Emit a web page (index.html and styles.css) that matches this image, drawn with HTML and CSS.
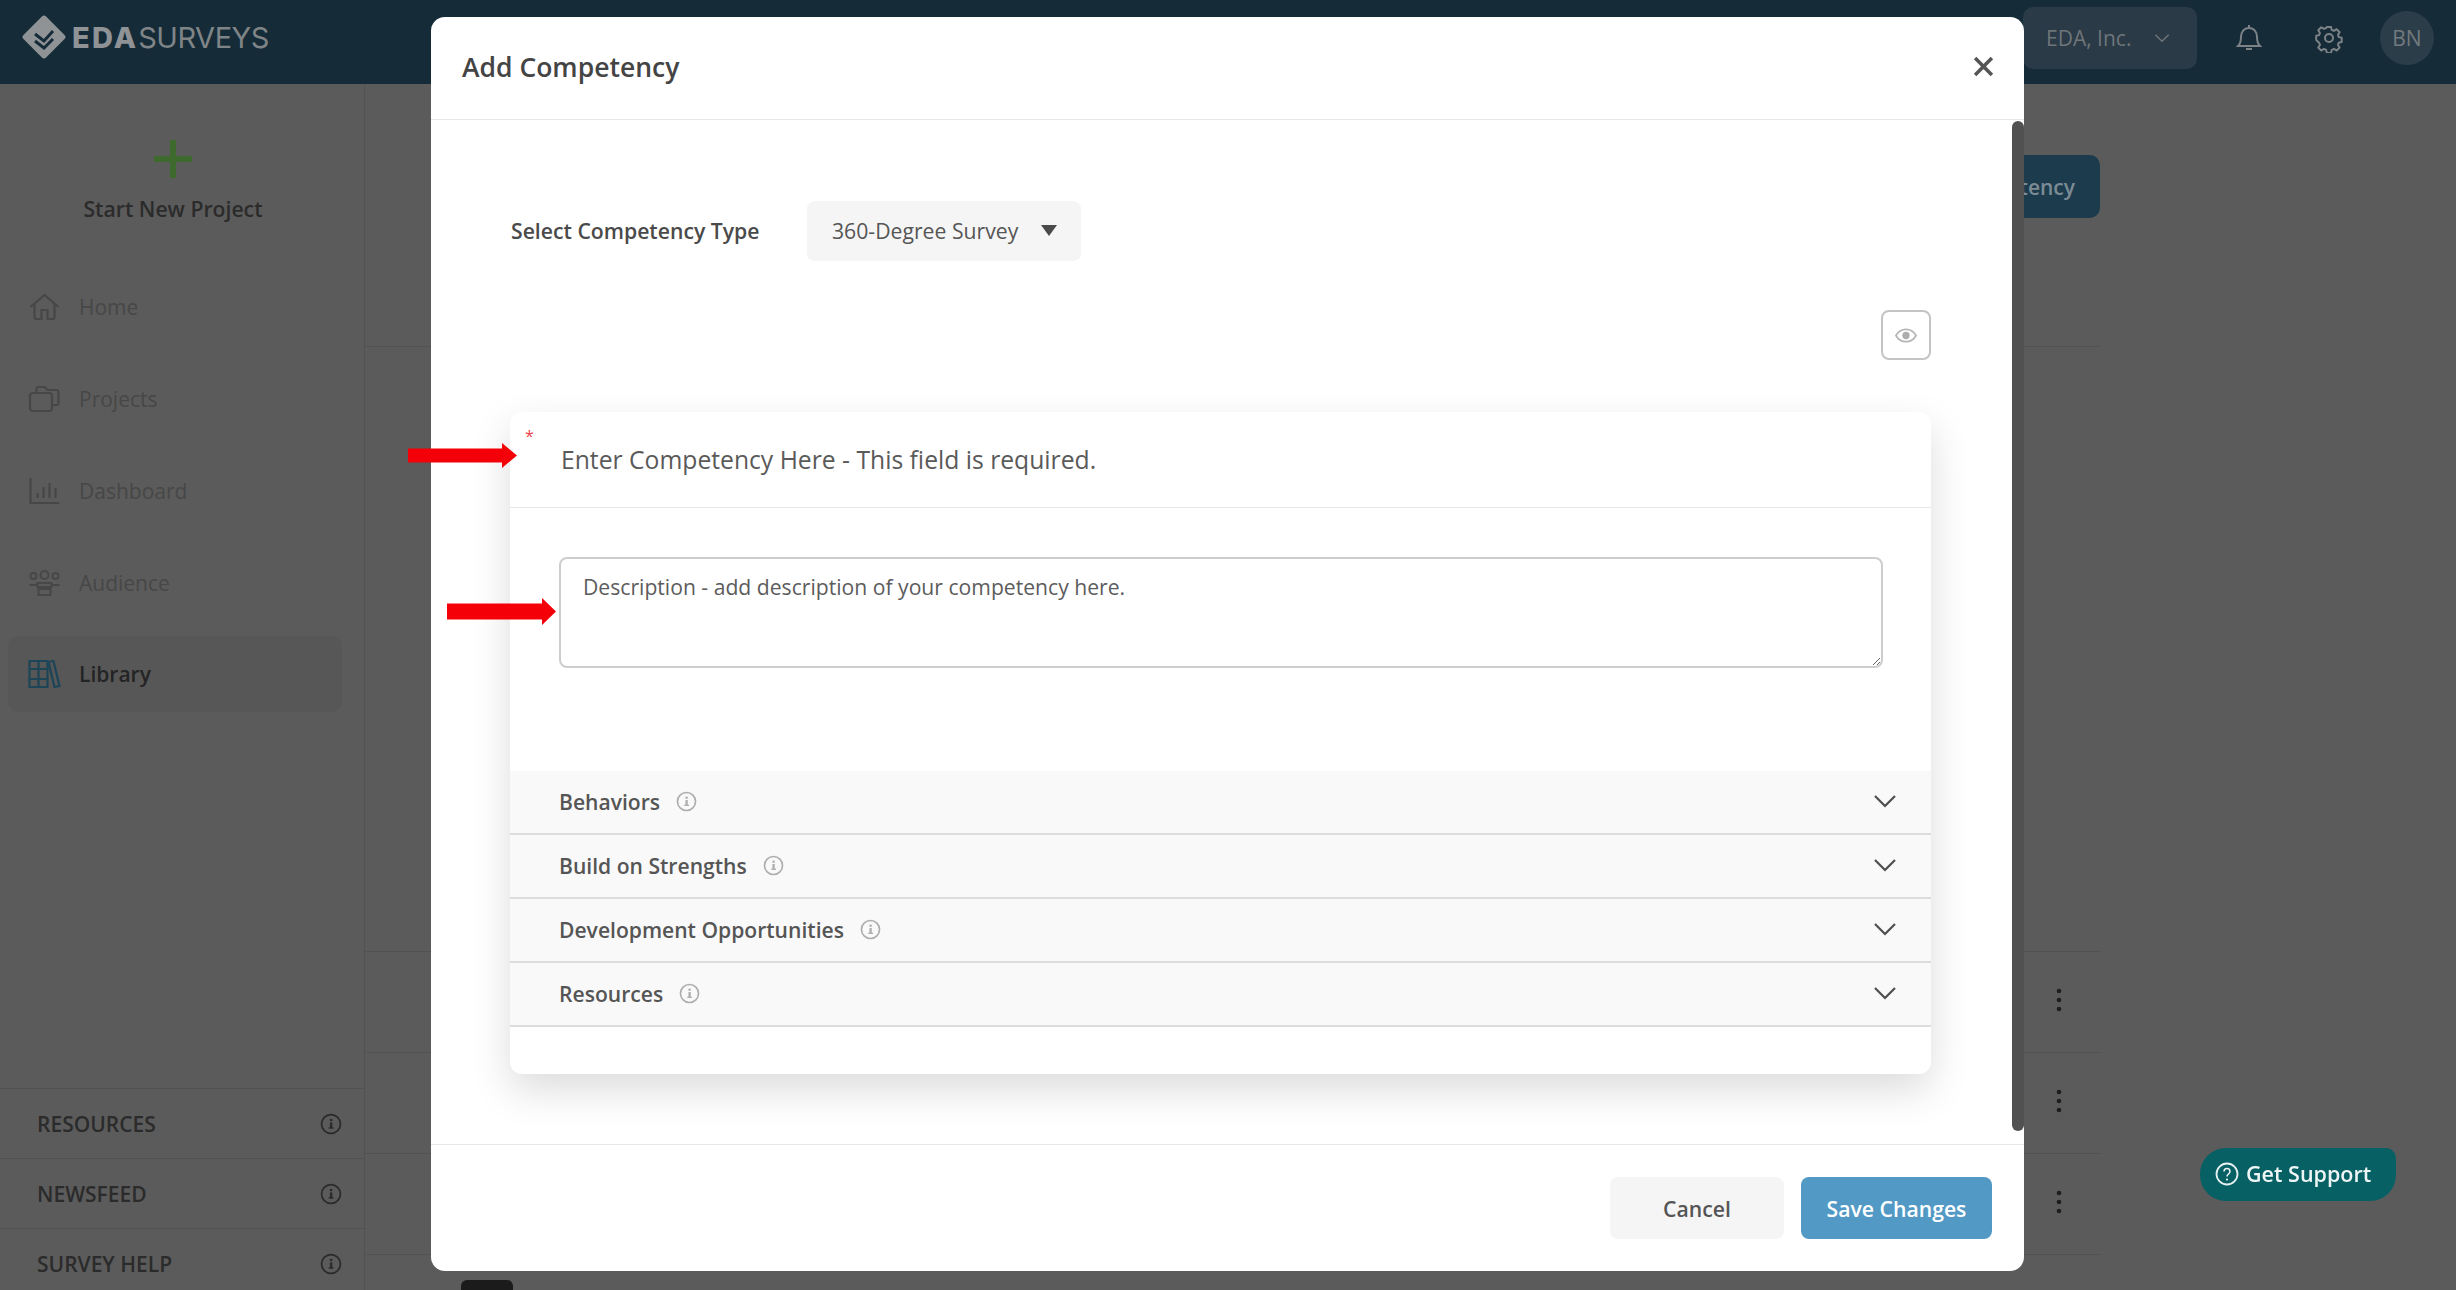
FILE: index.html
```html
<!DOCTYPE html>
<html lang="en">
<head>
<meta charset="utf-8">
<title>Add Competency</title>
<link rel="stylesheet" href="styles.css">
</head>
<body>
<svg class="defs" width="0" height="0" aria-hidden="true">
  <symbol id="info" viewBox="0 0 20 20">
    <circle cx="10" cy="10" r="8.6" fill="none" stroke="currentColor" stroke-width="1.6"/>
    <rect x="9" y="8.6" width="2.2" height="5.4" fill="currentColor"/>
    <rect x="9" y="5.4" width="2.2" height="2" fill="currentColor"/>
    <rect x="7.8" y="13" width="4.6" height="1.2" fill="currentColor"/>
  </symbol>
  <symbol id="chev" viewBox="0 0 24 14">
    <path d="M2 2l10 10L22 2" fill="none" stroke="currentColor" stroke-width="2.2"/>
  </symbol>
  <symbol id="kebab" viewBox="0 0 6 24">
    <circle cx="3" cy="3" r="2.3" fill="currentColor"/><circle cx="3" cy="12" r="2.3" fill="currentColor"/><circle cx="3" cy="21" r="2.3" fill="currentColor"/>
  </symbol>
</svg>

<div class="app">
  <header class="topbar">
    <div class="logo">
      <svg class="logo-mark" viewBox="0 0 48 48">
        <rect x="8" y="8" width="32" height="32" rx="3" transform="rotate(45 24 24)" fill="#8f9396"/>
        <path d="M15 21l9 7 9-10M15 28l9 7 9-9" fill="none" stroke="#152b38" stroke-width="3"/>
      </svg>
      <span class="logo-text"><b>EDA</b>SURVEYS</span>
    </div>
    <div class="top-right">
      <div class="org">EDA, Inc.
        <svg class="org-chev"><use href="#chev"/></svg>
      </div>
      <svg class="top-icon" viewBox="0 0 30 30">
        <path d="M4 23c2-2 3-4 3-9 0-5 3-9 8-9s8 4 8 9c0 5 1 7 3 9z M12 26h6 M15 2v3" fill="none" stroke="#7c8286" stroke-width="2"/>
      </svg>
      <svg class="top-icon gear" viewBox="0 0 30 30">
        <path d="M12.5 2h5l.8 3.6 2.6 1.1 3.2-2 3.5 3.6-2 3.1 1 2.6 3.4.8v5l-3.4.8-1 2.6 2 3.1-3.5 3.600-3.200-2-2.600 1.100-.800 3.600h-5l-.800-3.600-2.600-1.100-3.200 2-3.500-3.600 2-3.100-1-2.600L0 17.500v-5l3.400-.8 1-2.600-2-3.100L5.900 2.400l3.200 2 2.600-1.100z" transform="translate(2.200 2.200) scale(.85)" fill="none" stroke="#7c8286" stroke-width="2.300" stroke-linejoin="round"/>
        <circle cx="15" cy="15" r="4" fill="none" stroke="#7c8286" stroke-width="2"/>
      </svg>
      <div class="avatar">BN</div>
    </div>
  </header>

  <div class="shell">
    <aside class="sidebar">
      <div class="start">
        <svg class="plus" viewBox="0 0 38 38"><path d="M19 0v38M0 19h38" stroke="#3f6a2e" stroke-width="6"/></svg>
        <div class="start-label">Start New Project</div>
      </div>
      <nav class="nav">
        <div class="nav-item">
          <svg class="nav-icon" viewBox="0 0 32 28"><path d="M2 14L16 2l14 12M6 11v13a2 2 0 0 0 2 2h5v-9h6v9h5a2 2 0 0 0 2-2V11" fill="none" stroke="#474747" stroke-width="2.200"/></svg>
          <span>Home</span>
        </div>
        <div class="nav-item">
          <svg class="nav-icon" viewBox="0 0 32 28"><rect x="1.500" y="8" width="22" height="18" rx="3" fill="none" stroke="#474747" stroke-width="2.200"/><path d="M8 8V4a2 2 0 0 1 2-2h6l3 3h9a2 2 0 0 1 2 2v11a2 2 0 0 1-2 2h-4.500" fill="none" stroke="#474747" stroke-width="2.200"/></svg>
          <span>Projects</span>
        </div>
        <div class="nav-item">
          <svg class="nav-icon" viewBox="0 0 32 28"><path d="M2 1v25h29M9 16v5M15 10v11M21 6v15M27 11v10" fill="none" stroke="#474747" stroke-width="2.200"/></svg>
          <span>Dashboard</span>
        </div>
        <div class="nav-item">
          <svg class="nav-icon" viewBox="0 0 32 28"><circle cx="16" cy="6" r="4" fill="none" stroke="#474747" stroke-width="2"/><circle cx="5" cy="7" r="3" fill="none" stroke="#474747" stroke-width="2"/><circle cx="27" cy="7" r="3" fill="none" stroke="#474747" stroke-width="2"/><path d="M1 16h7M24 16h7M9 14h14v4h-14zM10 20h12v6H10z" fill="none" stroke="#474747" stroke-width="2"/></svg>
          <span>Audience</span>
        </div>
        <div class="nav-item active">
          <svg class="nav-icon" viewBox="0 0 32 28"><path d="M1 1h9v26H1zM10 1h9v26h-9zM1 9h18M1 19h18M20 2l5-1 6 25-5 1z" fill="none" stroke="#1c4558" stroke-width="2.200"/></svg>
          <span>Library</span>
        </div>
      </nav>
      <div class="side-links">
        <div class="side-link"><span>RESOURCES</span><svg class="side-info"><use href="#info"/></svg></div>
        <div class="side-link"><span>NEWSFEED</span><svg class="side-info"><use href="#info"/></svg></div>
        <div class="side-link"><span>SURVEY HELP</span><svg class="side-info"><use href="#info"/></svg></div>
      </div>
    </aside>
    <main class="main">
      <div class="main-head">
        <div class="main-btn">Add Competency</div>
      </div>
      <div class="table">
        <div class="table-row"><svg class="kebab"><use href="#kebab"/></svg></div>
        <div class="table-row"><svg class="kebab"><use href="#kebab"/></svg></div>
        <div class="table-row"><svg class="kebab"><use href="#kebab"/></svg></div>
        <div class="table-row"><svg class="kebab"><use href="#kebab"/></svg></div>
      </div>
      <div class="dark-chip"></div>
    </main>
  </div>

  <div class="support">
    <svg class="support-icon" viewBox="0 0 24 24"><circle cx="12" cy="12" r="10.500" fill="none" stroke="#e8f1f1" stroke-width="1.800"/><path d="M9 9.500c0-4 6-4 6 0 0 2.500-3 2.500-3 5" fill="none" stroke="#e8f1f1" stroke-width="1.600"/><circle cx="12" cy="17.500" r="1.100" fill="#e8f1f1"/></svg>
    Get Support
  </div>

  <div class="overlay">
    <section class="modal">
      <header class="modal-head">
        <h1 class="modal-title">Add Competency</h1>
        <svg class="close" viewBox="0 0 20 20"><path d="M2 2l16 16M18 2L2 18" stroke="#555" stroke-width="3.400"/></svg>
      </header>
      <div class="modal-body">
        <div class="type-row">
          <label class="type-label">Select Competency Type</label>
          <div class="select">360-Degree Survey<span class="caret"></span></div>
        </div>
        <div class="eye-row">
          <div class="eye-btn">
            <svg class="eye" viewBox="0 0 24 16"><path d="M1 8c5-9 17-9 22 0-5 9-17 9-22 0z" fill="none" stroke="#b5b5b5" stroke-width="1.800"/><circle cx="12" cy="8" r="4" fill="#adadad"/></svg>
          </div>
        </div>
        <div class="card">
          <div class="card-title">
            <span class="req">*</span>
            <span>Enter Competency Here - This field is required.</span>
          </div>
          <div class="card-desc">
            <textarea class="desc" placeholder="Description - add description of your competency here."></textarea>
          </div>
          <div class="accordion">
            <div class="acc-row"><span class="acc-label">Behaviors</span><svg class="acc-info"><use href="#info"/></svg><svg class="acc-chev"><use href="#chev"/></svg></div>
            <div class="acc-row"><span class="acc-label">Build on Strengths</span><svg class="acc-info"><use href="#info"/></svg><svg class="acc-chev"><use href="#chev"/></svg></div>
            <div class="acc-row"><span class="acc-label">Development Opportunities</span><svg class="acc-info"><use href="#info"/></svg><svg class="acc-chev"><use href="#chev"/></svg></div>
            <div class="acc-row"><span class="acc-label">Resources</span><svg class="acc-info"><use href="#info"/></svg><svg class="acc-chev"><use href="#chev"/></svg></div>
          </div>
        </div>
        <div class="scrollbar"></div>
      </div>
      <footer class="modal-foot">
        <div class="btn btn-cancel">Cancel</div>
        <div class="btn btn-save">Save Changes</div>
      </footer>
    </section>
    <svg class="arrow arrow-a" viewBox="0 0 109 25"><path d="M0 5.500h94V0l15 12.500L94 25v-5.500H0z" fill="#f40009"/></svg>
    <svg class="arrow arrow-b" viewBox="0 0 109 27"><path d="M0 5.500h95V0l14 13.500L95 27v-5.500H0z" fill="#f40009"/></svg>
  </div>
</div>
</body>
</html>
```
FILE: styles.css
```css
* { box-sizing: border-box; }
html, body { margin: 0; padding: 0; height: 100%; }
body {
  font-family: "Open Sans", "Liberation Sans", sans-serif;
  background: #5b5b5b;
  overflow: hidden;
}
.defs { position: absolute; }

.app {
  position: relative;
  width: 2456px;
  height: 1290px;
  display: flex;
  flex-direction: column;
  overflow: hidden;
  filter: blur(0.5px);
}

/* top bar */
.topbar {
  height: 84px;
  flex: none;
  background: #152b38;
  display: flex;
  align-items: center;
  justify-content: space-between;
  padding: 0 22px 8px 20px;
}
.logo { display: flex; align-items: center; gap: 4px; padding-bottom: 2px; }
.logo-mark { width: 48px; height: 48px; }
.logo-text {
  font-family: "Inter", "Liberation Sans", sans-serif;
  font-size: 29px;
  letter-spacing: -0.5px;
  color: #7f8487;
}
.logo-text b { font-weight: 800; letter-spacing: 2.200px; color: #8f9396; }
.top-right { display: flex; align-items: center; }
.org {
  width: 174px;
  height: 62px;
  margin-right: 37px;
  padding-left: 23px;
  border-radius: 10px;
  background: #2a3a46;
  color: #6e7579;
  font-size: 21px;
  display: flex;
  align-items: center;
}
.org-chev { width: 16px; height: 10px; margin-left: 23px; color: #6e7579; }
.top-icon { width: 30px; height: 30px; margin-right: 50px; }
.gear { margin-right: 36px; }
.avatar {
  width: 54px;
  height: 54px;
  border-radius: 50%;
  background: #2c3d4a;
  color: #737a7e;
  font-size: 21px;
  display: flex;
  align-items: center;
  justify-content: center;
}

/* shell */
.shell { flex: 1; display: flex; min-height: 0; }
.sidebar {
  width: 365px;
  flex: none;
  border-right: 1px solid #525252;
  display: flex;
  flex-direction: column;
  background: #5b5b5b;
}
.start {
  height: 177px;
  padding-top: 56px;
  display: flex;
  flex-direction: column;
  align-items: center;
  width: 346px;
}
.plus { width: 38px; height: 38px; }
.start-label {
  margin-top: 17px;
  font-size: 21.200px;
  font-weight: 600;
  line-height: 28px;
  color: #2b2b2b;
}
.nav { display: flex; flex-direction: column; padding: 0 22px 0 8px; }
.nav-item {
  height: 92px;
  display: flex;
  align-items: center;
  gap: 18px;
  padding-left: 20px;
  font-size: 21px;
  color: #474747;
}
.nav-icon { width: 33px; height: 28px; }
.nav-item.active {
  height: 76px;
  margin-top: 7px;
  border-radius: 10px;
  background: #575757;
  font-weight: 600;
  color: #242424;
}
.side-links { margin-top: auto; margin-bottom: -8px; display: flex; flex-direction: column; }
.side-link {
  height: 70px;
  flex: none;
  border-top: 1px solid #525252;
  display: flex;
  align-items: center;
  justify-content: space-between;
  padding: 0 22px 0 37px;
  font-size: 21px;
  font-weight: 600;
  color: #2b2b2b;
}
.side-info { width: 22px; height: 22px; color: #2b2b2b; }

/* main behind the modal */
.main { flex: 1; min-width: 0; position: relative; }
.main-head {
  height: 263px;
  width: 1735px;
  border-bottom: 1px solid #525252;
  padding: 71px 0 0;
  display: flex;
  justify-content: flex-end;
}
.main-btn {
  height: 63px;
  padding: 0 25px;
  border-radius: 10px;
  background: #1c3c4e;
  color: #7c8b94;
  font-size: 21px;
  font-weight: 600;
  display: flex;
  align-items: center;
}
.table { margin-top: 604px; width: 1736px; }
.table-row {
  height: 101px;
  border-top: 1px solid #525252;
  display: flex;
  align-items: center;
  justify-content: flex-end;
  padding: 0 39px 4px 0;
}
.kebab { width: 6px; height: 24px; color: #1e1e1e; }
.dark-chip {
  position: absolute;
  left: 96px;
  bottom: -8px;
  width: 52px;
  height: 18px;
  border-radius: 6px;
  background: #1b1b1b;
}

/* support pill */
.support {
  position: absolute;
  left: 2200px;
  top: 1148px;
  width: 196px;
  height: 53px;
  border-radius: 26px 10px 26px 26px;
  background: #066064;
  color: #eef5f5;
  font-size: 21.500px;
  font-weight: 600;
  display: flex;
  align-items: center;
  gap: 7px;
  padding: 0 0 2px 15px;
}
.support-icon { width: 24px; height: 24px; }

/* modal */
.overlay {
  position: absolute;
  inset: 0;
  padding: 17px 432px 19px 431px;
  display: flex;
}
.modal {
  flex: 1;
  background: #fff;
  border-radius: 14px;
  display: flex;
  flex-direction: column;
  min-width: 0;
}
.modal-head {
  height: 103px;
  flex: none;
  border-bottom: 1px solid #e6e6e6;
  display: flex;
  align-items: center;
  justify-content: space-between;
  padding: 0 30px 2px 31px;
}
.modal-title {
  margin: 0;
  font-size: 26.500px;
  font-weight: 600;
  color: #444;
}
.close { width: 21px; height: 21px; margin-top: -2px; }
.modal-body {
  flex: 1;
  position: relative;
  min-height: 0;
  padding: 81px 93px 0 79px;
}
.type-row { display: flex; align-items: center; height: 60px; }
.type-label {
  width: 297px;
  padding: 0 0 2px 1px;
  font-size: 21.200px;
  font-weight: 600;
  color: #4a4a4a;
}
.select {
  width: 274px;
  height: 60px;
  border-radius: 8px;
  background: #f5f5f5;
  color: #555;
  font-size: 21.200px;
  display: flex;
  align-items: center;
  padding: 0 0 2px 25px;
}
.caret {
  margin-left: 23px;
  border-left: 8px solid transparent;
  border-right: 8px solid transparent;
  border-top: 11px solid #4a4a4a;
}
.eye-row { display: flex; justify-content: flex-end; margin-top: 49px; }
.eye-btn {
  width: 50px;
  height: 50px;
  border: 2px solid #c4c4c4;
  border-radius: 8px;
  display: flex;
  align-items: center;
  justify-content: center;
}
.eye { width: 22px; height: 15px; }
.card {
  margin-top: 52px;
  height: 662px;
  border-radius: 12px;
  background: #fff;
  box-shadow: 0 16px 40px rgba(0, 0, 0, 0.14);
}
.card-title {
  position: relative;
  height: 96px;
  border-bottom: 1px solid #e6e6e6;
  padding: 30px 0 0 51px;
  font-size: 24.700px;
  line-height: 36px;
  color: #5a5a5a;
}
.req {
  position: absolute;
  left: 15px;
  top: 14px;
  font-size: 16px;
  line-height: 20px;
  color: #e8454b;
}
.card-desc { height: 263px; padding: 49px 48px 0 49px; }
.desc {
  display: block;
  width: 100%;
  height: 111px;
  padding: 14px 22px;
  border: 2px solid #cdcdcd;
  border-radius: 8px;
  background: #fff;
  font-family: inherit;
  font-size: 21.150px;
  line-height: 28px;
  color: #555;
  outline: none;
}
.desc::placeholder { color: #5c5c5c; opacity: 1; }
.acc-row {
  height: 64px;
  border-bottom: 2px solid #dcdcdc;
  background: #f9f9f9;
  display: flex;
  align-items: center;
  padding: 0 34px 2px 49px;
}
.acc-label { font-size: 21.100px; font-weight: 600; color: #555; }
.acc-info { width: 21px; height: 21px; margin-left: 16px; color: #aeaeae; }
.acc-chev { width: 24px; height: 14px; margin-left: auto; color: #4e4e4e; }
.scrollbar {
  position: absolute;
  right: 0;
  top: 1px;
  bottom: 13px;
  width: 12px;
  border-radius: 6px;
  background: #515151;
}
.modal-foot {
  height: 127px;
  flex: none;
  border-top: 1px solid #e6e6e6;
  display: flex;
  justify-content: flex-end;
  align-items: center;
  gap: 17px;
  padding-right: 32px;
}
.btn {
  height: 62px;
  border-radius: 8px;
  display: flex;
  align-items: center;
  justify-content: center;
  font-size: 21.200px;
  font-weight: 600;
}
.btn-cancel { width: 174px; background: #f5f5f5; color: #555; }
.btn-save { width: 191px; background: #529ac5; color: #fff; }
.arrow { position: absolute; }
.arrow-a { left: 408px; top: 443px; width: 109px; height: 25px; }
.arrow-b { left: 447px; top: 598px; width: 109px; height: 27px; }
```
